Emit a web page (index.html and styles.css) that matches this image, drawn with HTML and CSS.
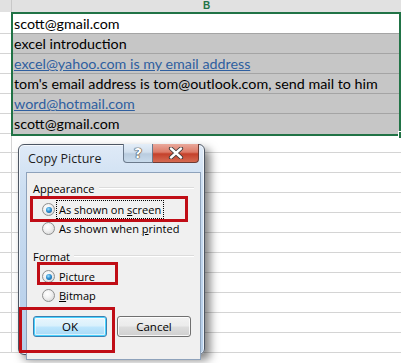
FILE: index.html
```html
<!DOCTYPE html>
<html lang="en">
<head>
    <meta charset="UTF-8">
    <title>Copy Picture</title>
    <link rel="stylesheet" href="styles.css">
</head>
<body>
    <div class="sheet">
        <div class="col-heads">
            <div class="head-a"></div>
            <div class="head-b">B</div>
        </div>
        <div class="data">
            <div class="col-a">
                <div class="cell-a"></div>
                <div class="cell-a"></div>
                <div class="cell-a"></div>
                <div class="cell-a"></div>
                <div class="cell-a"></div>
                <div class="cell-a"></div>
            </div>
            <div class="selection">
                <div class="cell first">scott@gmail.com</div>
                <div class="cell">excel introduction</div>
                <div class="cell link">excel@yahoo.com is my email address</div>
                <div class="cell">tom's email address is tom@outlook.com, send mail to him</div>
                <div class="cell link">word@hotmail.com</div>
                <div class="cell last">scott@gmail.com</div>
                <span class="fill-handle"></span>
            </div>
        </div>
        <div class="empty-rows">
            <div class="row short"><div class="cell-a"></div><div class="cell-b"></div></div>
            <div class="row"><div class="cell-a"></div><div class="cell-b"></div></div>
            <div class="row"><div class="cell-a"></div><div class="cell-b"></div></div>
            <div class="row"><div class="cell-a"></div><div class="cell-b"></div></div>
            <div class="row"><div class="cell-a"></div><div class="cell-b"></div></div>
            <div class="row"><div class="cell-a"></div><div class="cell-b"></div></div>
            <div class="row"><div class="cell-a"></div><div class="cell-b"></div></div>
            <div class="row"><div class="cell-a"></div><div class="cell-b"></div></div>
            <div class="row"><div class="cell-a"></div><div class="cell-b"></div></div>
            <div class="row"><div class="cell-a"></div><div class="cell-b"></div></div>
            <div class="row"><div class="cell-a"></div><div class="cell-b"></div></div>
        </div>
    </div>

    <!-- dialog floating over the sheet -->
    <div class="dialog">
        <div class="titlebar">
            <span class="title">Copy Picture</span>
            <div class="caption-btns">
                <span class="cap-help">?</span>
                <span class="cap-close">
                    <svg width="16" height="12" viewBox="0 0 16 12">
                        <path d="M3 1.5 L13 10.5 M13 1.5 L3 10.5" stroke="#3a3a3a" stroke-width="4.2" stroke-linecap="round"/>
                        <path d="M3 1.5 L13 10.5 M13 1.5 L3 10.5" stroke="#fff" stroke-width="2.4" stroke-linecap="round"/>
                    </svg>
                </span>
            </div>
        </div>
        <div class="client">
            <div class="group-title">Appearance</div>
            <div class="option first-opt">
                <span class="radio checked"></span>
                <span class="label focused">As shown on <u>s</u>creen</span>
            </div>
            <div class="option">
                <span class="radio"></span>
                <span class="label">As shown when <u>p</u>rinted</span>
            </div>
            <div class="group-title format">Format</div>
            <div class="option third-opt">
                <span class="radio checked"></span>
                <span class="label">Pic<u>t</u>ure</span>
            </div>
            <div class="option">
                <span class="radio"></span>
                <span class="label"><u>B</u>itmap</span>
            </div>
            <div class="buttons">
                <button class="btn default">OK</button>
                <button class="btn">Cancel</button>
            </div>
        </div>
    </div>

    <!-- red annotation boxes -->
    <div class="mark mark-screen"></div>
    <div class="mark mark-picture"></div>
    <div class="mark mark-ok"></div>
</body>
</html>
```

FILE: styles.css
```css
body {
    margin: 0;
    width: 401px;
    height: 363px;
    overflow: hidden;
    background-color: #fff;
    font-family: Lato, "Liberation Sans", sans-serif;
}
.sheet {
    width: 401px;
}
.col-heads {
    display: flex;
    height: 12px;
    background-color: #e1e1e1;
    overflow: hidden;
}
.head-a {
    width: 11px;
    border-right: 1px solid #c8c8c8;
}
.head-b {
    flex-grow: 1;
    text-align: center;
    color: #217346;
    font-family: "Liberation Sans", sans-serif;
    font-weight: bold;
    font-size: 10px;
    line-height: 11px;
}
.data {
    display: flex;
}
.col-a {
    width: 11px;
    padding-top: 2px;
}
.cell-a {
    height: 19px;
    border-bottom: 1px solid #d4d4d4;
}
.selection {
    position: relative;
    width: 386px;
    border: 2px solid #217346;
}
.cell {
    height: 19px;
    line-height: 19px;
    padding-left: 1px;
    font-size: 14.3px;
    color: #000;
    background-color: #c6c6c6;
    border-bottom: 1px solid #a4a4a4;
    white-space: nowrap;
}
.cell.first {
    background-color: #fff;
}
.cell.last {
    height: 20px;
    border-bottom: none;
}
.cell.link {
    color: #2f5f9f;
    text-decoration: underline;
}
.fill-handle {
    position: absolute;
    right: -4px;
    bottom: -4px;
    width: 4px;
    height: 6px;
    background-color: #217346;
    border-left: 1px solid #fff;
    border-top: 1px solid #fff;
}
.row {
    display: flex;
}
.row .cell-a {
    width: 11px;
    border-right: 1px solid #d4d4d4;
}
.row .cell-b {
    flex-grow: 1;
    height: 19px;
    border-bottom: 1px solid #d4d4d4;
}
.row.short .cell-a,
.row.short .cell-b {
    height: 16px;
}

/* dialog */
.dialog {
    position: absolute;
    left: 18px;
    top: 144px;
    width: 185px;
    height: 209px;
    border: 1px solid #4d5663;
    border-radius: 6px;
    background: linear-gradient(to bottom, #dfeaf7 0%, #cddff2 20%, #bfd5ed 60%, #b5cee9 100%);
    box-shadow: 5px 5px 10px rgba(0, 0, 0, 0.5), inset 0 0 0 1px rgba(255, 255, 255, 0.7);
    font-family: "Open Sans", "Noto Sans", sans-serif;
    font-size: 11px;
    color: #000;
}
.titlebar {
    position: relative;
    height: 27px;
}
.title {
    position: absolute;
    left: 9px;
    top: 5px;
    font-size: 12.5px;
    color: #1e1e1e;
}
.caption-btns {
    position: absolute;
    right: 5px;
    top: -1px;
    display: flex;
}
.cap-help,
.cap-close {
    height: 18px;
    border: 1px solid #6b7a8c;
    border-top: none;
    display: flex;
    align-items: center;
    justify-content: center;
}
.cap-help {
    width: 28px;
    border-radius: 0 0 0 4px;
    background: linear-gradient(to bottom, #e4eef8 0%, #d2e0ee 45%, #b9ccdf 55%, #c9dbec 100%);
    color: #fff;
    font-family: "DejaVu Sans", sans-serif;
    font-weight: bold;
    font-size: 14px;
    text-shadow: 0 0 1px #333, 0 0 1px #333, 0 0 1px #333;
}
.cap-close {
    width: 45px;
    border-left: none;
    border-color: #6e3b34;
    border-radius: 0 0 4px 0;
    background: linear-gradient(to bottom, #e9a99b 0%, #dd7b68 45%, #c4412b 55%, #d56a52 100%);
}
.client {
    margin: 0 3px 0 7px;
    height: 179px;
    background-color: #f0f0f0;
    border: 1px solid #8ea2bb;
    padding: 7px 4px 0 6px;
}
.group-title {
    display: flex;
    align-items: center;
    height: 16px;
    gap: 4px;
}
.group-title::after {
    content: "";
    flex-grow: 1;
    border-top: 1px solid #dcdcdc;
    border-bottom: 1px solid #fff;
    margin-right: 2px;
}
.group-title.format {
    margin-top: 10px;
}
.option {
    display: flex;
    align-items: center;
    height: 19px;
    padding-left: 9px;
    gap: 4px;
}
.option.first-opt {
    margin-top: 4px;
}
.option.third-opt {
    margin-top: 3px;
}
.radio {
    width: 11px;
    height: 11px;
    border-radius: 50%;
    border: 1px solid #8e8f8f;
    background: radial-gradient(circle at 40% 35%, #ffffff 0%, #f2f2f2 40%, #cfcfcf 100%);
    position: relative;
}
.radio.checked::after {
    content: "";
    position: absolute;
    left: 2.5px;
    top: 2.5px;
    width: 6px;
    height: 6px;
    border-radius: 50%;
    background: radial-gradient(circle at 40% 35%, #9fe0ff 0%, #2d8fd1 45%, #0b4f8a 100%);
}
.label u {
    text-decoration: underline;
}
.label.focused {
    outline: 1px dotted #000;
    outline-offset: 1px;
    padding: 0 1px;
    margin-left: -1px;
}
.buttons {
    display: flex;
    gap: 10px;
    margin-top: 11px;
}
.btn {
    width: 74px;
    height: 21px;
    padding: 0;
    font-family: "Open Sans", "Noto Sans", sans-serif;
    font-size: 11.5px;
    color: #000;
    border: 1px solid #707070;
    border-radius: 3px;
    background: linear-gradient(to bottom, #f2f2f2 0%, #ebebeb 48%, #dddddd 52%, #cfcfcf 100%);
    box-shadow: inset 0 0 0 1px rgba(255, 255, 255, 0.8);
}
.btn.default {
    border-color: #3c7fb1;
    box-shadow: inset 0 0 0 1px #48d2ff, inset 0 0 0 2px rgba(255, 255, 255, 0.6);
    background: linear-gradient(to bottom, #eaf6fd 0%, #d9f0fc 48%, #bee6fd 52%, #a7d9f5 100%);
}

/* annotations */
.mark {
    position: absolute;
    border: 3px solid #c00d16;
}
.mark-screen {
    left: 30px;
    top: 196px;
    width: 152px;
    height: 20px;
}
.mark-picture {
    left: 37px;
    top: 262px;
    width: 75px;
    height: 17px;
}
.mark-ok {
    left: 19px;
    top: 307px;
    width: 90px;
    height: 40px;
}
```
